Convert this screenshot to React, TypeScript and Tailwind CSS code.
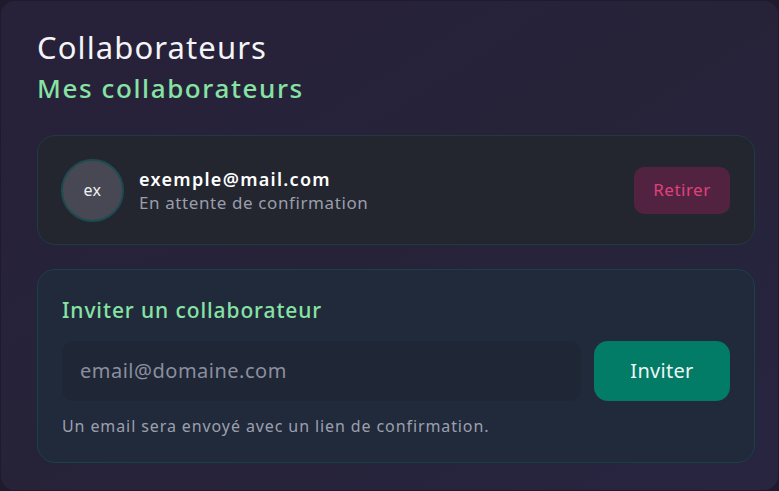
import React from "react";

export default function App() {
  return (
    <div
      className="w-[779px] h-[491px] bg-[#1f1b2d] p-[1px] overflow-hidden"
      style={{ fontFamily: '"Noto Sans", "Open Sans", sans-serif' }}
    >
      <div className="h-full w-full rounded-[14px] bg-gradient-to-br from-[#27213a] via-[#262339] to-[#272540] pl-[36px] pr-[23px] pt-[26px]">
        <h1 className="text-[31px] leading-[40px] text-[#f4f4f6] font-normal tracking-[1.1px]">
          Collaborateurs
        </h1>
        <h2 className="mt-[4px] text-[26px] leading-[34px] text-[#86e3a4] font-medium tracking-[1.6px]">
          Mes collaborateurs
        </h2>

        <div className="mt-[30px] h-[110px] rounded-[18px] border border-[#1d3c42] bg-[#23262f] flex items-center pl-[23px] pr-[24px]">
          <div className="w-[63px] h-[63px] rounded-full border-2 border-[#1d4c50] bg-[#474854] flex items-center justify-center text-[16px] text-[#eeeef2] tracking-[0.5px]">
            ex
          </div>
          <div className="ml-[15px] flex flex-col">
            <span className="text-[18px] leading-[25px] font-semibold text-white tracking-[1.3px]">
              exemple@mail.com
            </span>
            <span className="text-[17px] leading-[22px] text-[#9a9eab] tracking-[0.6px]">
              En attente de confirmation
            </span>
          </div>
          <button className="ml-auto w-[96px] h-[47px] rounded-[10px] bg-[#512340] text-[#e0407d] text-[17px] tracking-[0.5px]">
            Retirer
          </button>
        </div>

        <div className="mt-[24px] h-[194px] rounded-[18px] border border-[#1b4046] bg-[#212a3b] px-[24px] pt-[26px]">
          <div className="text-[21px] leading-[29px] text-[#86e3a4] font-medium tracking-[0.9px]">
            Inviter un collaborateur
          </div>
          <div className="mt-[16px] flex gap-[13px]">
            <div className="flex-1 h-[60px] rounded-[12px] bg-[#1f2636] flex items-center pl-[18px] text-[20px] text-[#8b8f9e] tracking-[0.5px]">
              email@domaine.com
            </div>
            <button className="w-[136px] h-[60px] rounded-[14px] bg-[#027b67] text-[20px] text-[#eef6f3] tracking-[0.3px]">
              Inviter
            </button>
          </div>
          <div className="mt-[14px] text-[16px] leading-[22px] text-[#9ca0ad] tracking-[0.9px]">
            Un email sera envoyé avec un lien de confirmation.
          </div>
        </div>
      </div>
    </div>
  );
}
